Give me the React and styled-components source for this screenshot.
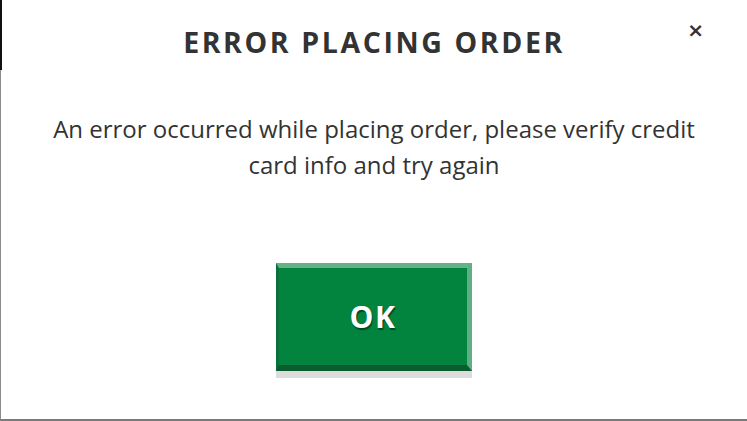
import styled, { createGlobalStyle } from 'styled-components';

const GlobalStyle = createGlobalStyle`
  html, body {
    margin: 0;
    padding: 0;
    background: #fff;
  }
  * {
    box-sizing: border-box;
  }
`;

const Modal = styled.div`
  position: relative;
  width: 747px;
  height: 421px;
  background: #fff;
  border-left: 1px solid #8c8c8c;
  border-bottom: 2px solid #7a7a7a;
  font-family: "Open Sans", "Noto Sans", sans-serif;
  color: #333;
  display: flex;
  flex-direction: column;
  align-items: center;
  padding-top: 22px;

  &::before {
    content: "";
    position: absolute;
    left: -1px;
    top: 0;
    width: 2px;
    height: 70px;
    background: #111;
  }
`;

const Title = styled.h1`
  margin: 0;
  font-size: 28.5px;
  font-weight: 700;
  letter-spacing: 2.6px;
  line-height: 40px;
  color: #333;
  text-align: center;
`;

const CloseButton = styled.button`
  position: absolute;
  top: 19px;
  right: 43px;
  border: 0;
  background: none;
  padding: 0;
  font-family: "DejaVu Sans", sans-serif;
  font-size: 20px;
  font-weight: 700;
  line-height: 22px;
  color: #333;
  cursor: pointer;
`;

const Message = styled.p`
  margin: 49px 0 0;
  padding: 0 30px;
  font-size: 24px;
  line-height: 36px;
  text-align: center;
  color: #333;
`;

const OkButton = styled.button`
  margin-top: 80px;
  width: 196px;
  height: 108px;
  background: #02843f;
  border-top: 5px solid #62b386;
  border-left: 3px solid #08703a;
  border-right: 5px solid #5faf86;
  border-bottom: 6px solid #0a5c2f;
  box-shadow: 0 7px 0 #dcdcdc;
  color: #fff;
  font-family: "Open Sans", "Noto Sans", sans-serif;
  font-size: 30px;
  font-weight: 700;
  letter-spacing: 1.5px;
  text-shadow: 1px 2px 1px rgba(0, 0, 0, 0.45);
  cursor: pointer;
`;

export default function App() {
  return (
    <>
      <GlobalStyle />
      <Modal>
        <CloseButton>×</CloseButton>
        <Title>ERROR PLACING ORDER</Title>
        <Message>
          An error occurred while placing order, please verify credit
          <br />
          card info and try again
        </Message>
        <OkButton>OK</OkButton>
      </Modal>
    </>
  );
}
